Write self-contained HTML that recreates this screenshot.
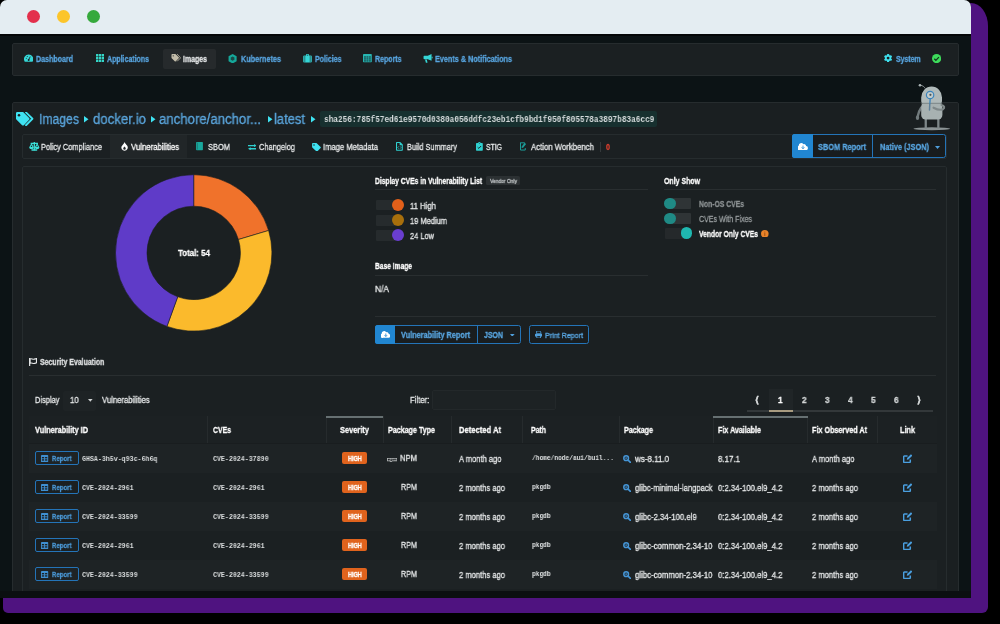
<!DOCTYPE html>
<html lang="en"><head><meta charset="utf-8"><title>Anchore Enterprise - Image Vulnerabilities</title>
<style>
html,body{margin:0;padding:0;background:#000;width:1000px;height:624px;overflow:hidden}
body{position:relative;font-family:"Liberation Sans",sans-serif}
.abs,.t,svg.i{position:absolute}
.t{white-space:pre;display:block;will-change:transform;transform-origin:0 50%;-webkit-text-stroke:.3px currentColor}
#shadow{left:3px;top:2.5px;width:985px;height:610.5px;border-radius:18px 17px 6px 5px/18px 23px 6px 5px;background:#4f1380}
#win{left:0;top:0;width:970.5px;height:598px;border-radius:7px 7px 0 0;background:#0c1315;overflow:hidden}
#bar{left:0;top:0;width:971px;height:34px;background:#e4edf2}
#barline{left:0;top:34px;width:971px;height:2px;background:#050708}
.dot{width:13px;height:13px;border-radius:50%;top:10.2px}
.panel{background:#1b2022;border:1px solid #262c2e;box-sizing:border-box;border-radius:2px}
</style></head><body>
<div id="shadow" class="abs"></div>
<div id="win" class="abs">
<div id="bar" class="abs"></div><div id="barline" class="abs"></div>
<div class="abs dot" style="left:27px;background:#e3304c"></div>
<div class="abs dot" style="left:57.2px;background:#fcc52a"></div>
<div class="abs dot" style="left:87.2px;background:#35a93c"></div>

<!-- nav panel -->
<div class="abs panel" style="left:12px;top:42.5px;width:947px;height:33.5px"></div>
<div class="abs" style="left:163px;top:48.5px;width:53px;height:20px;background:#262a2c;border-radius:2px"></div>
<!-- main panel -->
<div class="abs panel" style="left:12px;top:101.5px;width:947px;height:500px;background:#1a1f21"></div>
<!-- sha box -->
<div class="abs" style="left:319.6px;top:111.3px;width:337.5px;height:15.4px;background:#17302f;border-radius:2px"></div>
<!-- tab bar -->
<div class="abs panel" style="left:22px;top:134px;width:925px;height:25px;background:#1b2022"></div>
<div class="abs" style="left:110px;top:135px;width:77px;height:23px;background:#212628"></div>
<!-- content panel -->
<div class="abs panel" style="left:22px;top:166px;width:925px;height:440px;background:#1b2022"></div>
<!-- NAV ICONS -->
<svg class="i" style="left:23.8px;top:53.9px" width="9.300" height="8.300" viewBox="0 0 18 16"><path d="M9 1a9 9 0 0 0-7.8 13.5c.2.3.5.5.9.5h13.8c.4 0 .7-.2.9-.5A9 9 0 0 0 9 1z" fill="#35d6d6"/><circle cx="9" cy="11.5" r="1.8" fill="#1b2022"/><path d="M9 11.5l3-6.5" stroke="#1b2022" stroke-width="1.6"/><circle cx="4.5" cy="8" r="1" fill="#1b2022"/><circle cx="6.3" cy="4.8" r="1" fill="#1b2022"/></svg>
<svg class="i" style="left:95.7px;top:54px" width="8.400" height="8.400" viewBox="0 0 17 17"><g fill="#35d6c8"><rect x="0" y="0" width="5" height="5" rx=".6"/><rect x="6" y="0" width="5" height="5" rx=".6"/><rect x="12" y="0" width="5" height="5" rx=".6"/><rect x="0" y="6" width="5" height="5" rx=".6"/><rect x="6" y="6" width="5" height="5" rx=".6"/><rect x="12" y="6" width="5" height="5" rx=".6"/><rect x="0" y="12" width="5" height="5" rx=".6"/><rect x="6" y="12" width="5" height="5" rx=".6"/><rect x="12" y="12" width="5" height="5" rx=".6"/></g></svg>
<svg class="i" style="left:170.8px;top:54.2px" width="10" height="8.5" viewBox="0 0 20 17"><path d="M1 1.5A1.5 1.5 0 0 1 2.500 0h5.900a1.500 1.500 0 0 1 1.100.4l6 6a1.500 1.500 0 0 1 0 2.100l-5.900 5.900a1.500 1.500 0 0 1-2.100 0l-6-6A1.500 1.500 0 0 1 1 7.400z" fill="#c2bca9"/><path d="M12 .3l6.300 6.200a1.500 1.500 0 0 1 0 2.100l-6 6" stroke="#c2bca9" stroke-width="1.700" fill="none"/><circle cx="4.500" cy="3.700" r="1.300" fill="#2a2f31"/></svg>
<svg class="i" style="left:227.7px;top:53.600px" width="9.200" height="9.700" viewBox="0 0 16 18"><path d="M8 0l7.500 4.300v9L8 17.600.500 13.300v-9z" fill="#15a89a"/><path d="M8 4.600l3.400 2v4L8 12.600l-3.400-2v-4z" fill="#1b4a47"/></svg>
<svg class="i" style="left:302.5px;top:54px" width="9" height="8.600" viewBox="0 0 18 17"><path d="M6 3V1.500A1.500 1.500 0 0 1 7.500 0h3A1.500 1.500 0 0 1 12 1.500V3h3.500A2 2 0 0 1 17.500 5v10a2 2 0 0 1-2 2h-13a2 2 0 0 1-2-2V5a2 2 0 0 1 2-2zm1.600 0h2.800V1.600H7.600z" fill="#35d6d6"/><path d="M3.600 3v14M14.400 3v14" stroke="#1b2022" stroke-width="1.100"/></svg>
<svg class="i" style="left:362.8px;top:54.300px" width="8.800" height="8.400" viewBox="0 0 18 17"><rect x="0" y="0" width="18" height="17" rx="1.500" fill="#27b7b3"/><g fill="#1b5a5c"><rect x="2" y="4.500" width="4" height="3"/><rect x="7" y="4.500" width="4" height="3"/><rect x="12" y="4.500" width="4" height="3"/><rect x="2" y="8.500" width="4" height="3"/><rect x="7" y="8.500" width="4" height="3"/><rect x="12" y="8.500" width="4" height="3"/><rect x="2" y="12.500" width="4" height="3"/><rect x="7" y="12.500" width="4" height="3"/><rect x="12" y="12.500" width="4" height="3"/></g></svg>
<svg class="i" style="left:423.2px;top:54px" width="9.600" height="9" viewBox="0 0 19 18"><path d="M17 0v13.500L9.500 10.500H2.500A1.500 1.500 0 0 1 1 9V5A1.500 1.500 0 0 1 2.500 3.500h7z" fill="#35d6d6"/><path d="M4 11h3.500l1.300 5.500a1 1 0 0 1-1 1.200H6.500a1 1 0 0 1-1-.8z" fill="#35d6d6"/><rect x="17.300" y="5" width="1.700" height="4" rx=".8" fill="#35d6d6"/></svg>
<svg class="i" style="left:883.900px;top:54px" width="8.200" height="8.200" viewBox="0 0 20 20"><g fill="#3fe0ee"><circle cx="10" cy="10" r="7.600"/><rect x="7.400" y="0" width="5.200" height="20" rx="1" transform="rotate(0 10 10)"/><rect x="7.400" y="0" width="5.200" height="20" rx="1" transform="rotate(60 10 10)"/><rect x="7.400" y="0" width="5.200" height="20" rx="1" transform="rotate(120 10 10)"/></g><circle cx="10" cy="10" r="3.400" fill="#1b2022"/></svg>
<svg class="i" style="left:931.8px;top:54px" width="9.200" height="9.200" viewBox="0 0 20 20"><circle cx="10" cy="10" r="10" fill="#3ddb5b"/><path d="M5 10.300l3.400 3.400 6.600-6.900" stroke="#14301c" stroke-width="2.600" fill="none"/></svg>
<!-- BREADCRUMB ICONS -->
<svg class="i" style="left:15.500px;top:111.500px" width="18" height="14.500" viewBox="0 0 36 29"><path d="M0 2.500A2.500 2.500 0 0 1 2.500 0h10.600a2.500 2.500 0 0 1 1.800.700l11.400 11.400a2.500 2.500 0 0 1 0 3.500L15.700 26.300a2.500 2.500 0 0 1-3.500 0L.700 14.900A2.500 2.500 0 0 1 0 13.100z" fill="#3fe3f2"/><circle cx="6" cy="6.300" r="2.500" fill="#1b2022"/><path d="M20 .800l12.900 12.700-12.900 13" stroke="#3fe3f2" stroke-width="3.600" fill="none" stroke-linecap="round" stroke-linejoin="round"/></svg>
<svg class="i" style="left:84.400px;top:116.200px" width="4.500" height="6.500" viewBox="0 0 9 13"><path d="M0 0l9 6.500L0 13z" fill="#3fe3f2"/></svg>
<svg class="i" style="left:151px;top:116.200px" width="4.500" height="6.500" viewBox="0 0 9 13"><path d="M0 0l9 6.500L0 13z" fill="#3fe3f2"/></svg>
<svg class="i" style="left:268px;top:116.200px" width="4.500" height="6.500" viewBox="0 0 9 13"><path d="M0 0l9 6.500L0 13z" fill="#3fe3f2"/></svg>
<svg class="i" style="left:311px;top:116.200px" width="4.500" height="6.500" viewBox="0 0 9 13"><path d="M0 0l9 6.500L0 13z" fill="#3fe3f2"/></svg>
<!-- TAB ICONS -->
<svg class="i" style="left:29.400px;top:142.300px" width="10.600" height="8.800" viewBox="0 0 21 18"><g fill="#3ce0d8"><rect x="9.200" y="0" width="2.600" height="17"/><rect x="3" y="1.500" width="15" height="2.600"/><rect x="4.500" y="15" width="12" height="3" rx="1"/><path d="M0 10h9.500a4.750 5 0 0 1-9.500 0zM11.500 10H21a4.750 5 0 0 1-9.500 0z"/><path d="M4.750 2L.2 10.500h2.600l1.950-4 1.950 4h2.600zM16.250 2l-4.550 8.500h2.600l1.950-4 1.950 4h2.600z"/></g></svg>
<svg class="i" style="left:120.600px;top:142.200px" width="7" height="8.800" viewBox="0 0 14 18"><path d="M7 0c.8 3 3.500 4.500 5.300 7.300A6.700 6.700 0 0 1 7 18 6.700 6.700 0 0 1 1.200 8.600C2.500 6.300 5.500 4.600 7 0z" fill="#ffffff"/><path d="M7 9c1.300 1.600 2.600 2.700 2.600 4.400a2.600 2.600 0 0 1-5.200 0C4.400 11.700 5.700 10.600 7 9z" fill="#24292b"/></svg>
<svg class="i" style="left:195.800px;top:142.300px" width="7" height="8.300" viewBox="0 0 14 17"><rect x="0" y="0" width="14" height="17" rx="1.500" fill="#19a79c"/><rect x="2.200" y="1.500" width="1.200" height="14" fill="#1c6d68"/></svg>
<svg class="i" style="left:247.500px;top:143.600px" width="8.800" height="6.400" viewBox="0 0 18 13"><g fill="#2fd0d0"><path d="M0 1.900h12.500V0L18 3.300l-5.500 3.300V4.700H0z"/><path d="M18 8.300H5.500V6.400L0 9.700 5.500 13v-1.900H18z"/></g></svg>
<svg class="i" style="left:311.600px;top:142.600px" width="9.200" height="8.500" viewBox="0 0 18 17"><path d="M0 1.500A1.500 1.500 0 0 1 1.500 0h6.700a1.500 1.500 0 0 1 1.100.400l7.700 7.700a1.500 1.500 0 0 1 0 2.100l-6.400 6.400a1.500 1.500 0 0 1-2.100 0L.400 8.900A1.500 1.500 0 0 1 0 7.800z" fill="#3fe3f2"/><circle cx="3.800" cy="3.800" r="1.500" fill="#1b2022"/></svg>
<svg class="i" style="left:396.400px;top:142.200px" width="6.800" height="8.800" viewBox="0 0 14 18"><path d="M1.500 0h7.200L14 5.300V16.500A1.500 1.500 0 0 1 12.500 18h-11A1.500 1.500 0 0 1 0 16.500v-15A1.500 1.500 0 0 1 1.500 0z" fill="#2fd0d0"/><path d="M2.200 2.200h5.300v4.300h4.300v9.300H2.200z" fill="#1b2022"/><path d="M5.500 9L3.600 11.300l1.900 2.300M8.500 9l1.900 2.300-1.900 2.300" stroke="#2fd0d0" stroke-width="1.500" fill="none"/></svg>
<svg class="i" style="left:476.200px;top:142.200px" width="6.800" height="8.800" viewBox="0 0 14 18"><path d="M1.500 2h2.700A2.900 2.900 0 0 1 7 0a2.900 2.900 0 0 1 2.800 2h2.700A1.500 1.500 0 0 1 14 3.500v13A1.500 1.500 0 0 1 12.500 18h-11A1.500 1.500 0 0 1 0 16.500v-13A1.500 1.500 0 0 1 1.500 2z" fill="#2fd0d0"/><path d="M3.500 10.800l2.300 2.300 4.700-4.900" stroke="#1b2022" stroke-width="2" fill="none"/><circle cx="7" cy="2.800" r="1" fill="#1b2022"/></svg>
<svg class="i" style="left:520px;top:142.400px" width="8" height="8.600" viewBox="0 0 16 17"><path d="M1 1.500h8.500M1 1v15h9.500v-4" stroke="#1c9c98" stroke-width="2" fill="none"/><path d="M9 1.200l3.200 2.600-6 7.400-3 .7.400-3.200z" fill="#1c9c98"/></svg>
<div class="abs" style="left:599.700px;top:141.500px;width:1px;height:10px;background:#34393b"></div>
<!-- SBOM report button group -->
<div class="abs" style="left:792px;top:134.200px;width:154px;height:23.600px;box-sizing:border-box;border:1px solid #2474b8;border-radius:2.500px;background:#181c1e"></div>
<div class="abs" style="left:792px;top:134.200px;width:20.500px;height:23.600px;background:#2186d1;border-radius:2.500px 0 0 2.500px"></div>
<div class="abs" style="left:872.2px;top:135px;width:1px;height:22.500px;background:#2474b8"></div>
<svg class="i" style="left:797.500px;top:142.800px" width="10" height="7.200" viewBox="0 0 20 14"><path d="M16.200 6A4 4 0 0 0 10.700 2.300 5 5 0 0 0 1.500 5.500 4.200 4.200 0 0 0 4.500 14h11a4 4 0 0 0 .7-8z" fill="#fff"/><path d="M10 5v6M7.300 8.500l2.700 2.800 2.700-2.800" stroke="#2186d1" stroke-width="1.700" fill="none"/></svg>
<svg class="i" style="left:934.500px;top:145.500px" width="5" height="3" viewBox="0 0 10 6"><path d="M0 0h10L5 6z" fill="#4f9fdc"/></svg>
<svg class="i" style="left:0;top:0" width="971" height="598" viewBox="0 0 971 598"><path d="M193.70 174.70A78.2 78.2 0 0 1 268.61 230.47L238.44 239.51A46.7 46.7 0 0 0 193.70 206.20Z" fill="#f0722b" stroke="#1b2022" stroke-width="0.6"/><path d="M268.61 230.47A78.2 78.2 0 0 1 166.95 326.38L177.73 296.78A46.7 46.7 0 0 0 238.44 239.51Z" fill="#fbba2c" stroke="#1b2022" stroke-width="0.6"/><path d="M166.95 326.38A78.2 78.2 0 0 1 193.70 174.70L193.70 206.20A46.7 46.7 0 0 0 177.73 296.78Z" fill="#5f3bc8" stroke="#1b2022" stroke-width="0.6"/></svg>
<div class="abs" style="left:375px;top:189px;width:273px;height:1px;background:#292e30"></div>
<div class="abs" style="left:664px;top:189px;width:272px;height:1px;background:#292e30"></div>
<div class="abs" style="left:375px;top:275px;width:273px;height:1px;background:#292e30"></div>
<div class="abs" style="left:375px;top:315.8px;width:561px;height:1px;background:#292e30"></div>
<div class="abs" style="left:29px;top:374.6px;width:907px;height:1px;background:#292e30"></div>
<div class="abs" style="left:485.5px;top:175.800px;width:34.500px;height:9px;background:#2b3032;border-radius:1.5px"></div>
<div class="abs" style="left:376px;top:199.7px;width:20px;height:10.6px;background:#262b2d;border-radius:1px 0 0 1px"></div>
<div class="abs" style="left:391.8px;top:199px;width:12px;height:12px;border-radius:50%;background:#e2601a"></div>
<div class="abs" style="left:376px;top:215.0px;width:20px;height:10.6px;background:#262b2d;border-radius:1px 0 0 1px"></div>
<div class="abs" style="left:391.8px;top:214.3px;width:12px;height:12px;border-radius:50%;background:#a86f0c"></div>
<div class="abs" style="left:376px;top:230.0px;width:20px;height:10.6px;background:#262b2d;border-radius:1px 0 0 1px"></div>
<div class="abs" style="left:391.8px;top:229.3px;width:12px;height:12px;border-radius:50%;background:#6a3ed0"></div>
<div class="abs" style="left:664.5px;top:198.2px;width:26.5px;height:11px;background:#2f3436;border-radius:5.5px 1px 1px 5.5px"></div>
<div class="abs" style="left:664.3px;top:198.0px;width:11.4px;height:11.4px;border-radius:50%;background:#1f8a85"></div>
<div class="abs" style="left:664.5px;top:212.7px;width:26.5px;height:11px;background:#2f3436;border-radius:5.5px 1px 1px 5.5px"></div>
<div class="abs" style="left:664.3px;top:212.5px;width:11.4px;height:11.4px;border-radius:50%;background:#1f8a85"></div>
<div class="abs" style="left:664.5px;top:227.7px;width:22px;height:11px;background:#25292b;border-radius:1px"></div>
<div class="abs" style="left:680.6px;top:227.29999999999998px;width:11.8px;height:11.8px;border-radius:50%;background:#1fb8b0"></div>
<svg class="i" style="left:761.2px;top:229.7px" width="7.6" height="7.6" viewBox="0 0 16 16"><circle cx="8" cy="8" r="8" fill="#e8832a"/><rect x="7" y="6.5" width="2" height="6" fill="#9a4f12"/><circle cx="8" cy="4.3" r="1.2" fill="#9a4f12"/></svg>
<div class="abs" style="left:375.3px;top:325.2px;width:145.5px;height:18.4px;box-sizing:border-box;border:1px solid #2474b8;border-radius:2.5px;background:#191d1f"></div>
<div class="abs" style="left:375.3px;top:325.2px;width:20px;height:18.4px;background:#2186d1;border-radius:2.5px 0 0 2.5px"></div>
<div class="abs" style="left:476.5px;top:326px;width:1px;height:17.5px;background:#2474b8"></div>
<svg class="i" style="left:380.5px;top:331.3px" width="9.6" height="6.9" viewBox="0 0 20 14"><path d="M16.2 6A4 4 0 0 0 10.7 2.3 5 5 0 0 0 1.5 5.5 4.2 4.2 0 0 0 4.5 14h11a4 4 0 0 0 .7-8z" fill="#fff"/><path d="M10 5v6M7.3 8.5l2.700 2.800 2.700-2.800" stroke="#2186d1" stroke-width="1.7" fill="none"/></svg>
<svg class="i" style="left:510px;top:333.5px" width="4.6" height="2.8" viewBox="0 0 10 6"><path d="M0 0h10L5 6z" fill="#4f9fdc"/></svg>
<div class="abs" style="left:529px;top:325.2px;width:60px;height:18.4px;box-sizing:border-box;border:1px solid #2474b8;border-radius:2.5px;background:#191d1f"></div>
<svg class="i" style="left:535px;top:331px" width="7.4" height="7.4" viewBox="0 0 16 16"><path d="M3.5 0h7L12.5 2v4h-9z" fill="none" stroke="#4f9fdc" stroke-width="1.8"/><path d="M1.5 6h13A1.500 1.500 0 0 1 16 7.500V12h-3v4H3v-4H0V7.500A1.500 1.500 0 0 1 1.500 6z" fill="#4f9fdc"/><rect x="4.8" y="11" width="6.4" height="3.3" fill="#1b2022"/></svg>
<svg class="i" style="left:29.3px;top:357.5px" width="8" height="8.5" viewBox="0 0 16 17"><path d="M1.300 0v17" stroke="#e6e8e9" stroke-width="2.400"/><path d="M2 2c3-1.500 5 1 7.500.500 1.500-.3 3.500-1 5.500-1.500v8.500c-2 .8-3.500 1.500-5.500 1.500-2.500 0-4.500-2-7.500-.5z" fill="none" stroke="#e6e8e9" stroke-width="2.300"/></svg>
<div class="abs" style="left:63px;top:390.5px;width:32.5px;height:20px;background:#1e2325;border-radius:2px"></div>
<svg class="i" style="left:88px;top:399.3px" width="4.6" height="2.8" viewBox="0 0 10 6"><path d="M0 0h10L5 6z" fill="#d0d3d4"/></svg>
<div class="abs" style="left:432px;top:389.5px;width:124px;height:20px;box-sizing:border-box;background:#1d2224;border:1px solid #23282a;border-radius:2px"></div>
<div class="abs" style="left:746.7px;top:410.4px;width:186px;height:1.8px;background:#33383a"></div>
<div class="abs" style="left:769.4px;top:389px;width:23.5px;height:22px;background:#202527"></div>
<div class="abs" style="left:769.4px;top:410.2px;width:23.5px;height:2px;background:#a89b80"></div>
<div class="abs" style="left:29px;top:416.3px;width:908px;height:27px;background:#1c2123"></div>
<div class="abs" style="left:29px;top:443px;width:908px;height:1px;background:#191d1f"></div>
<div class="abs" style="left:207px;top:416.3px;width:1px;height:27px;background:#262b2d"></div>
<div class="abs" style="left:325.8px;top:416.3px;width:1px;height:27px;background:#262b2d"></div>
<div class="abs" style="left:383px;top:416.3px;width:1px;height:27px;background:#262b2d"></div>
<div class="abs" style="left:451.4px;top:416.3px;width:1px;height:27px;background:#262b2d"></div>
<div class="abs" style="left:521.6px;top:416.3px;width:1px;height:27px;background:#262b2d"></div>
<div class="abs" style="left:618.8px;top:416.3px;width:1px;height:27px;background:#262b2d"></div>
<div class="abs" style="left:712.5px;top:416.3px;width:1px;height:27px;background:#262b2d"></div>
<div class="abs" style="left:807.2px;top:416.3px;width:1px;height:27px;background:#262b2d"></div>
<div class="abs" style="left:877.4px;top:416.3px;width:1px;height:27px;background:#262b2d"></div>
<div class="abs" style="left:326.3px;top:416px;width:57px;height:1.8px;background:#667072"></div>
<div class="abs" style="left:713px;top:416px;width:94.5px;height:1.8px;background:#667072"></div>
<div class="abs" style="left:29px;top:443.6px;width:908px;height:29.0px;background:#1e2325"></div>
<div class="abs" style="left:35px;top:450.7px;width:43.5px;height:14.8px;box-sizing:border-box;border:1px solid #2474b8;border-radius:2px"></div>
<svg class="i" style="left:41.4px;top:454.5px" width="7.2" height="7.2" viewBox="0 0 16 16"><rect x="0" y="0" width="16" height="16" rx="1.5" fill="#3f8fd0"/><g fill="#1b2022"><rect x="2" y="4.5" width="5" height="3"/><rect x="9" y="4.5" width="5" height="3"/><rect x="2" y="9.5" width="5" height="3"/><rect x="9" y="9.5" width="5" height="3"/></g></svg>
<div class="abs" style="left:342.3px;top:451.8px;width:24.5px;height:12.6px;background:#e0631d;border-radius:2px"></div>
<svg class="i" style="left:387.3px;top:457.5px" width="10.200" height="4.200" viewBox="0 0 18 7"><path d="M0 0h18v5.600H9V7H5V5.600H0z" fill="#b4b7b8"/><path d="M1.5 1.200h3.800v3.200h-1V2.300h-.9v2.100H1.500zM6.200 1.200h3.900v3.200H8.100v1H6.200zm1.900 1v1.200h.9V2.200zM11 1.200h5.600v3.200h-1V2.300h-.9v2.100h-.9V2.300h-.9v2.100H11z" fill="#1b2022"/></svg>
<svg class="i" style="left:623.4px;top:454.5px" width="8" height="8" viewBox="0 0 16 16"><circle cx="6.300" cy="6.300" r="4.700" fill="none" stroke="#4595d6" stroke-width="3"/><path d="M10.200 10.200l4.600 4.600" stroke="#4595d6" stroke-width="3.200" stroke-linecap="round"/><path d="M6.300 4.200v4.200M4.200 6.300h4.200" stroke="#4595d6" stroke-width="1.300"/></svg>
<svg class="i" style="left:902.8px;top:454.1px" width="9.6" height="9" viewBox="0 0 19 18"><path d="M14.500 11v4.300a1.500 1.500 0 0 1-1.500 1.500H2.700a1.500 1.500 0 0 1-1.500-1.500V5.700A1.500 1.500 0 0 1 2.700 4.200H9" fill="none" stroke="#4a9fe0" stroke-width="3"/><path d="M7.500 11.500l.6-3.300L15.800.500l2.700 2.700-7.700 7.700z" fill="#4a9fe0"/></svg>
<div class="abs" style="left:35px;top:479.7px;width:43.5px;height:14.8px;box-sizing:border-box;border:1px solid #2474b8;border-radius:2px"></div>
<svg class="i" style="left:41.4px;top:483.5px" width="7.2" height="7.2" viewBox="0 0 16 16"><rect x="0" y="0" width="16" height="16" rx="1.5" fill="#3f8fd0"/><g fill="#1b2022"><rect x="2" y="4.5" width="5" height="3"/><rect x="9" y="4.5" width="5" height="3"/><rect x="2" y="9.5" width="5" height="3"/><rect x="9" y="9.5" width="5" height="3"/></g></svg>
<div class="abs" style="left:342.3px;top:480.8px;width:24.5px;height:12.6px;background:#e0631d;border-radius:2px"></div>
<svg class="i" style="left:623.4px;top:483.5px" width="8" height="8" viewBox="0 0 16 16"><circle cx="6.300" cy="6.300" r="4.700" fill="none" stroke="#4595d6" stroke-width="3"/><path d="M10.200 10.200l4.600 4.600" stroke="#4595d6" stroke-width="3.200" stroke-linecap="round"/><path d="M6.300 4.200v4.200M4.200 6.300h4.200" stroke="#4595d6" stroke-width="1.300"/></svg>
<svg class="i" style="left:902.8px;top:483.1px" width="9.6" height="9" viewBox="0 0 19 18"><path d="M14.500 11v4.300a1.500 1.500 0 0 1-1.500 1.500H2.700a1.500 1.500 0 0 1-1.500-1.500V5.700A1.500 1.500 0 0 1 2.700 4.200H9" fill="none" stroke="#4a9fe0" stroke-width="3"/><path d="M7.500 11.500l.6-3.300L15.800.500l2.700 2.700-7.700 7.700z" fill="#4a9fe0"/></svg>
<div class="abs" style="left:29px;top:501.6px;width:908px;height:29.0px;background:#1e2325"></div>
<div class="abs" style="left:35px;top:508.7px;width:43.5px;height:14.8px;box-sizing:border-box;border:1px solid #2474b8;border-radius:2px"></div>
<svg class="i" style="left:41.4px;top:512.5px" width="7.2" height="7.2" viewBox="0 0 16 16"><rect x="0" y="0" width="16" height="16" rx="1.5" fill="#3f8fd0"/><g fill="#1b2022"><rect x="2" y="4.5" width="5" height="3"/><rect x="9" y="4.5" width="5" height="3"/><rect x="2" y="9.5" width="5" height="3"/><rect x="9" y="9.5" width="5" height="3"/></g></svg>
<div class="abs" style="left:342.3px;top:509.8px;width:24.5px;height:12.6px;background:#e0631d;border-radius:2px"></div>
<svg class="i" style="left:623.4px;top:512.5px" width="8" height="8" viewBox="0 0 16 16"><circle cx="6.300" cy="6.300" r="4.700" fill="none" stroke="#4595d6" stroke-width="3"/><path d="M10.200 10.200l4.600 4.600" stroke="#4595d6" stroke-width="3.200" stroke-linecap="round"/><path d="M6.300 4.200v4.200M4.200 6.300h4.200" stroke="#4595d6" stroke-width="1.300"/></svg>
<svg class="i" style="left:902.8px;top:512.1px" width="9.6" height="9" viewBox="0 0 19 18"><path d="M14.500 11v4.300a1.500 1.500 0 0 1-1.500 1.500H2.700a1.500 1.500 0 0 1-1.500-1.500V5.700A1.500 1.500 0 0 1 2.700 4.200H9" fill="none" stroke="#4a9fe0" stroke-width="3"/><path d="M7.500 11.500l.6-3.300L15.800.500l2.700 2.700-7.700 7.700z" fill="#4a9fe0"/></svg>
<div class="abs" style="left:35px;top:537.7px;width:43.5px;height:14.8px;box-sizing:border-box;border:1px solid #2474b8;border-radius:2px"></div>
<svg class="i" style="left:41.4px;top:541.5px" width="7.2" height="7.2" viewBox="0 0 16 16"><rect x="0" y="0" width="16" height="16" rx="1.5" fill="#3f8fd0"/><g fill="#1b2022"><rect x="2" y="4.5" width="5" height="3"/><rect x="9" y="4.5" width="5" height="3"/><rect x="2" y="9.5" width="5" height="3"/><rect x="9" y="9.5" width="5" height="3"/></g></svg>
<div class="abs" style="left:342.3px;top:538.8px;width:24.5px;height:12.6px;background:#e0631d;border-radius:2px"></div>
<svg class="i" style="left:623.4px;top:541.5px" width="8" height="8" viewBox="0 0 16 16"><circle cx="6.300" cy="6.300" r="4.700" fill="none" stroke="#4595d6" stroke-width="3"/><path d="M10.200 10.200l4.600 4.600" stroke="#4595d6" stroke-width="3.200" stroke-linecap="round"/><path d="M6.300 4.200v4.200M4.200 6.300h4.200" stroke="#4595d6" stroke-width="1.300"/></svg>
<svg class="i" style="left:902.8px;top:541.1px" width="9.6" height="9" viewBox="0 0 19 18"><path d="M14.500 11v4.300a1.500 1.500 0 0 1-1.500 1.500H2.700a1.500 1.500 0 0 1-1.500-1.500V5.700A1.500 1.500 0 0 1 2.700 4.200H9" fill="none" stroke="#4a9fe0" stroke-width="3"/><path d="M7.500 11.500l.6-3.300L15.800.500l2.700 2.700-7.700 7.700z" fill="#4a9fe0"/></svg>
<div class="abs" style="left:29px;top:559.6px;width:908px;height:29.0px;background:#1e2325"></div>
<div class="abs" style="left:35px;top:566.7px;width:43.5px;height:14.8px;box-sizing:border-box;border:1px solid #2474b8;border-radius:2px"></div>
<svg class="i" style="left:41.4px;top:570.5px" width="7.2" height="7.2" viewBox="0 0 16 16"><rect x="0" y="0" width="16" height="16" rx="1.5" fill="#3f8fd0"/><g fill="#1b2022"><rect x="2" y="4.5" width="5" height="3"/><rect x="9" y="4.5" width="5" height="3"/><rect x="2" y="9.5" width="5" height="3"/><rect x="9" y="9.5" width="5" height="3"/></g></svg>
<div class="abs" style="left:342.3px;top:567.8px;width:24.5px;height:12.6px;background:#e0631d;border-radius:2px"></div>
<svg class="i" style="left:623.4px;top:570.5px" width="8" height="8" viewBox="0 0 16 16"><circle cx="6.300" cy="6.300" r="4.700" fill="none" stroke="#4595d6" stroke-width="3"/><path d="M10.200 10.200l4.600 4.600" stroke="#4595d6" stroke-width="3.200" stroke-linecap="round"/><path d="M6.300 4.200v4.200M4.200 6.300h4.200" stroke="#4595d6" stroke-width="1.300"/></svg>
<svg class="i" style="left:902.8px;top:570.1px" width="9.6" height="9" viewBox="0 0 19 18"><path d="M14.500 11v4.300a1.500 1.500 0 0 1-1.500 1.500H2.700a1.500 1.500 0 0 1-1.500-1.500V5.700A1.500 1.500 0 0 1 2.700 4.200H9" fill="none" stroke="#4a9fe0" stroke-width="3"/><path d="M7.500 11.500l.6-3.300L15.800.500l2.700 2.700-7.700 7.700z" fill="#4a9fe0"/></svg>
<svg class="i" style="left:900px;top:76px" width="64" height="60" viewBox="900 76 64 60">
<ellipse cx="931.8" cy="128.8" rx="18.3" ry="1.5" fill="#8b9395"/>
<rect x="924.6" y="118" width="2.3" height="10.5" fill="#7d8688"/><rect x="937.2" y="118" width="2.3" height="10.5" fill="#7d8688"/>
<path d="M921.3 107.500C919.500 110 918.500 113 917.800 116" stroke="#727b7d" stroke-width="2.4" stroke-linecap="round" fill="none"/><ellipse cx="917.5" cy="117.8" rx="1.7" ry="2.3" fill="#727b7d"/>
<rect x="921.2" y="102" width="21.2" height="17.5" rx="4.5" fill="#a7b1b1"/>
<path d="M921.200 97.500a10.400 11 0 0 1 20.800 0v3.500a2.500 2.500 0 0 1-2.500 2.500h-15.800a2.500 2.500 0 0 1-2.500-2.500z" fill="#b0baba"/>
<path d="M921.200 103.300h21" stroke="#6f797a" stroke-width=".8"/>
<path d="M941.500 105c3 .5 3.500 3 1.500 4.200-2.500 1.200-6 .3-9.500-1.500" stroke="#7f8889" stroke-width="2.100" stroke-linecap="round" fill="none"/>
<path d="M925.300 88.500C924 86.500 922.500 85.500 920.500 85.300" stroke="#8b9395" stroke-width=".9" fill="none"/><circle cx="920" cy="85.200" r="1.300" fill="#aab3b4"/>
<circle cx="930.1" cy="95" r="3.7" fill="#c3cccc" stroke="#3b84bd" stroke-width="1.2"/><circle cx="930.4" cy="94.800" r="1.100" fill="#4d5557"/>
<path d="M930.200 98.800l-.4 5.200" stroke="#3b84bd" stroke-width="1.300"/><path d="M929.800 104l-.3 6" stroke="#5d7f99" stroke-width="1.500" stroke-linecap="round"/>
</svg>
<div class="abs" style="left:0;top:591.3px;width:971px;height:7px;background:#0b0f11"></div>
<span class="t" style='left:36.0px;top:52.6px;font:700 9px/13px "Liberation Sans", sans-serif;color:#58a5e0;transform:scaleX(0.7870);'>Dashboard</span>
<span class="t" style='left:107.0px;top:52.6px;font:700 9px/13px "Liberation Sans", sans-serif;color:#58a5e0;transform:scaleX(0.7776);'>Applications</span>
<span class="t" style='left:183.0px;top:52.6px;font:700 9px/13px "Liberation Sans", sans-serif;color:#e6e8e9;transform:scaleX(0.7734);'>Images</span>
<span class="t" style='left:241.0px;top:52.6px;font:700 9px/13px "Liberation Sans", sans-serif;color:#58a5e0;transform:scaleX(0.8078);'>Kubernetes</span>
<span class="t" style='left:314.5px;top:52.6px;font:700 9px/13px "Liberation Sans", sans-serif;color:#58a5e0;transform:scaleX(0.7787);'>Policies</span>
<span class="t" style='left:374.5px;top:52.6px;font:700 9px/13px "Liberation Sans", sans-serif;color:#58a5e0;transform:scaleX(0.7791);'>Reports</span>
<span class="t" style='left:435.0px;top:52.6px;font:700 9px/13px "Liberation Sans", sans-serif;color:#58a5e0;transform:scaleX(0.8062);'>Events &amp; Notifications</span>
<span class="t" style='left:895.6px;top:52.6px;font:700 9px/13px "Liberation Sans", sans-serif;color:#58a5e0;transform:scaleX(0.7680);'>System</span>
<span class="t" style='left:39.0px;top:109.1px;font:400 14px/20px "Liberation Sans", sans-serif;color:#5aa5dc;transform:scaleX(0.8710);'>Images</span>
<span class="t" style='left:93.0px;top:109.1px;font:400 14px/20px "Liberation Sans", sans-serif;color:#5aa5dc;transform:scaleX(0.9456);'>docker.io</span>
<span class="t" style='left:159.0px;top:109.1px;font:400 14px/20px "Liberation Sans", sans-serif;color:#5aa5dc;transform:scaleX(0.9428);'>anchore/anchor...</span>
<span class="t" style='left:274.0px;top:109.1px;font:400 14px/20px "Liberation Sans", sans-serif;color:#5aa5dc;transform:scaleX(0.9262);'>latest</span>
<span class="t" style='left:323.6px;top:113.5px;font:700 9px/13px "Liberation Mono", monospace;color:#d4dadb;transform:scaleX(0.8616);-webkit-text-stroke:0;'>sha256:785f57ed61e9570d0380a056ddfc23eb1cfb9bd1f950f805578a3897b83a6cc9</span>
<span class="t" style='left:41.0px;top:140.6px;font:400 9px/13px "Liberation Sans", sans-serif;color:#e6e8e9;transform:scaleX(0.8240);'>Policy Compliance</span>
<span class="t" style='left:131.0px;top:140.6px;font:400 9px/13px "Liberation Sans", sans-serif;color:#ffffff;transform:scaleX(0.8617);'>Vulnerabilities</span>
<span class="t" style='left:208.0px;top:140.6px;font:400 9px/13px "Liberation Sans", sans-serif;color:#e6e8e9;transform:scaleX(0.8297);'>SBOM</span>
<span class="t" style='left:259.0px;top:140.6px;font:400 9px/13px "Liberation Sans", sans-serif;color:#e6e8e9;transform:scaleX(0.8267);'>Changelog</span>
<span class="t" style='left:323.0px;top:140.6px;font:400 9px/13px "Liberation Sans", sans-serif;color:#e6e8e9;transform:scaleX(0.8455);'>Image Metadata</span>
<span class="t" style='left:407.0px;top:140.6px;font:400 9px/13px "Liberation Sans", sans-serif;color:#e6e8e9;transform:scaleX(0.8193);'>Build Summary</span>
<span class="t" style='left:486.0px;top:140.6px;font:400 9px/13px "Liberation Sans", sans-serif;color:#e6e8e9;transform:scaleX(0.7613);'>STIG</span>
<span class="t" style='left:531.0px;top:140.6px;font:400 9px/13px "Liberation Sans", sans-serif;color:#e6e8e9;transform:scaleX(0.8645);'>Action Workbench</span>
<span class="t" style='left:606.0px;top:140.6px;font:700 9px/13px "Liberation Sans", sans-serif;color:#e0402f;transform:scaleX(0.7975);'>0</span>
<span class="t" style='left:818.0px;top:140.6px;font:700 9px/13px "Liberation Sans", sans-serif;color:#58a5e0;transform:scaleX(0.8205);'>SBOM Report</span>
<span class="t" style='left:880.0px;top:140.6px;font:700 9px/13px "Liberation Sans", sans-serif;color:#58a5e0;transform:scaleX(0.8162);'>Native (JSON)</span>
<span class="t" style='left:178.0px;top:246.6px;font:700 9px/13px "Liberation Sans", sans-serif;color:#ffffff;transform:scaleX(0.8805);'>Total: 54</span>
<span class="t" style='left:375.0px;top:175.1px;font:700 9px/13px "Liberation Sans", sans-serif;color:#ffffff;transform:scaleX(0.7471);'>Display CVEs in Vulnerability List</span>
<span class="t" style='left:489.5px;top:177.0px;font:400 5.5px/8px "Liberation Sans", sans-serif;color:#b8bcbe;transform:scaleX(0.8916);'>Vendor Only</span>
<span class="t" style='left:410.0px;top:199.6px;font:400 9px/13px "Liberation Sans", sans-serif;color:#e6e8e9;transform:scaleX(0.8564);'>11 High</span>
<span class="t" style='left:410.0px;top:214.6px;font:400 9px/13px "Liberation Sans", sans-serif;color:#e6e8e9;transform:scaleX(0.8309);'>19 Medium</span>
<span class="t" style='left:410.0px;top:229.6px;font:400 9px/13px "Liberation Sans", sans-serif;color:#e6e8e9;transform:scaleX(0.8267);'>24 Low</span>
<span class="t" style='left:375.0px;top:260.1px;font:700 9px/13px "Liberation Sans", sans-serif;color:#ffffff;transform:scaleX(0.7395);'>Base Image</span>
<span class="t" style='left:375.0px;top:283.1px;font:400 9px/13px "Liberation Sans", sans-serif;color:#e6e8e9;transform:scaleX(0.9324);'>N/A</span>
<span class="t" style='left:401.0px;top:328.6px;font:700 9px/13px "Liberation Sans", sans-serif;color:#58a5e0;transform:scaleX(0.8100);'>Vulnerability Report</span>
<span class="t" style='left:484.0px;top:328.6px;font:700 9px/13px "Liberation Sans", sans-serif;color:#58a5e0;transform:scaleX(0.7750);'>JSON</span>
<span class="t" style='left:545.0px;top:330.6px;font:400 7.5px/10px "Liberation Sans", sans-serif;color:#58a5e0;transform:scaleX(0.9493);'>Print Report</span>
<span class="t" style='left:664.0px;top:175.1px;font:700 9px/13px "Liberation Sans", sans-serif;color:#ffffff;transform:scaleX(0.7739);'>Only Show</span>
<span class="t" style='left:699.0px;top:197.8px;font:700 9px/13px "Liberation Sans", sans-serif;color:#8b9092;transform:scaleX(0.7561);'>Non-OS CVEs</span>
<span class="t" style='left:699.0px;top:213.1px;font:400 9px/13px "Liberation Sans", sans-serif;color:#9a9fa1;transform:scaleX(0.7850);'>CVEs With Fixes</span>
<span class="t" style='left:699.0px;top:227.6px;font:700 9px/13px "Liberation Sans", sans-serif;color:#ffffff;transform:scaleX(0.7465);'>Vendor Only CVEs</span>
<span class="t" style='left:40.0px;top:355.9px;font:700 9px/13px "Liberation Sans", sans-serif;color:#dfe1e2;transform:scaleX(0.7710);'>Security Evaluation</span>
<span class="t" style='left:35.0px;top:394.0px;font:400 9px/13px "Liberation Sans", sans-serif;color:#e6e8e9;transform:scaleX(0.8267);'>Display</span>
<span class="t" style='left:70.0px;top:394.0px;font:400 9px/13px "Liberation Sans", sans-serif;color:#e6e8e9;transform:scaleX(0.8686);'>10</span>
<span class="t" style='left:102.0px;top:394.0px;font:400 9px/13px "Liberation Sans", sans-serif;color:#e6e8e9;transform:scaleX(0.8545);'>Vulnerabilities</span>
<span class="t" style='left:410.2px;top:394.1px;font:400 9px/13px "Liberation Sans", sans-serif;color:#e6e8e9;transform:scaleX(0.8578);'>Filter:</span>
<span class="t" style='left:754.7px;top:393.9px;font:700 9px/13px "Liberation Sans", sans-serif;color:#d2d5d6;transform:scaleX(1.1500);'>⟨</span>
<span class="t" style='left:777.7px;top:393.9px;font:700 9px/13px "Liberation Sans", sans-serif;color:#ffffff;transform:scaleX(0.9171);'>1</span>
<span class="t" style='left:801.7px;top:393.9px;font:700 9px/13px "Liberation Sans", sans-serif;color:#d2d5d6;transform:scaleX(0.9171);'>2</span>
<span class="t" style='left:824.7px;top:393.9px;font:700 9px/13px "Liberation Sans", sans-serif;color:#d2d5d6;transform:scaleX(0.9171);'>3</span>
<span class="t" style='left:847.7px;top:393.9px;font:700 9px/13px "Liberation Sans", sans-serif;color:#d2d5d6;transform:scaleX(0.9171);'>4</span>
<span class="t" style='left:870.7px;top:393.9px;font:700 9px/13px "Liberation Sans", sans-serif;color:#d2d5d6;transform:scaleX(0.9171);'>5</span>
<span class="t" style='left:893.7px;top:393.9px;font:700 9px/13px "Liberation Sans", sans-serif;color:#d2d5d6;transform:scaleX(0.9171);'>6</span>
<span class="t" style='left:916.7px;top:393.9px;font:700 9px/13px "Liberation Sans", sans-serif;color:#d2d5d6;transform:scaleX(1.1500);'>⟩</span>
<span class="t" style='left:35.0px;top:424.0px;font:700 9px/13px "Liberation Sans", sans-serif;color:#ffffff;transform:scaleX(0.8130);'>Vulnerability ID</span>
<span class="t" style='left:213.0px;top:424.0px;font:700 9px/13px "Liberation Sans", sans-serif;color:#ffffff;transform:scaleX(0.7654);'>CVEs</span>
<span class="t" style='left:340.0px;top:424.0px;font:700 9px/13px "Liberation Sans", sans-serif;color:#ffffff;transform:scaleX(0.8278);'>Severity</span>
<span class="t" style='left:388.0px;top:424.0px;font:700 9px/13px "Liberation Sans", sans-serif;color:#ffffff;transform:scaleX(0.7916);'>Package Type</span>
<span class="t" style='left:459.0px;top:424.0px;font:700 9px/13px "Liberation Sans", sans-serif;color:#ffffff;transform:scaleX(0.8453);'>Detected At</span>
<span class="t" style='left:531.0px;top:424.0px;font:700 9px/13px "Liberation Sans", sans-serif;color:#ffffff;transform:scaleX(0.7686);'>Path</span>
<span class="t" style='left:624.0px;top:424.0px;font:700 9px/13px "Liberation Sans", sans-serif;color:#ffffff;transform:scaleX(0.7938);'>Package</span>
<span class="t" style='left:718.0px;top:424.0px;font:700 9px/13px "Liberation Sans", sans-serif;color:#ffffff;transform:scaleX(0.7910);'>Fix Available</span>
<span class="t" style='left:812.0px;top:424.0px;font:700 9px/13px "Liberation Sans", sans-serif;color:#ffffff;transform:scaleX(0.8007);'>Fix Observed At</span>
<span class="t" style='left:900.0px;top:424.0px;font:700 9px/13px "Liberation Sans", sans-serif;color:#ffffff;transform:scaleX(0.8101);'>Link</span>
<span class="t" style='left:51.5px;top:453.7px;font:700 7.5px/10px "Liberation Sans", sans-serif;color:#4a97d4;transform:scaleX(0.8067);'>Report</span>
<span class="t" style='left:82.0px;top:453.7px;font:700 7.4px/10px "Liberation Mono", monospace;color:#d9dcdd;transform:scaleX(0.8950);-webkit-text-stroke:0;'>GHSA-3h5v-q93c-6h6q</span>
<span class="t" style='left:213.0px;top:453.7px;font:700 7.4px/10px "Liberation Mono", monospace;color:#d9dcdd;transform:scaleX(0.8951);-webkit-text-stroke:0;'>CVE-2024-37890</span>
<span class="t" style='left:347.5px;top:453.7px;font:700 6.5px/9px "Liberation Sans", sans-serif;color:#ffffff;transform:scaleX(0.8492);'>HIGH</span>
<span class="t" style='left:400.0px;top:452.0px;font:400 9px/13px "Liberation Sans", sans-serif;color:#e6e8e9;transform:scaleX(0.8500);'>NPM</span>
<span class="t" style='left:459.0px;top:452.7px;font:400 9px/13px "Liberation Sans", sans-serif;color:#e6e8e9;transform:scaleX(0.8408);'>A month ago</span>
<span class="t" style='left:532.0px;top:453.2px;font:700 7px/10px "Liberation Mono", monospace;color:#dfe2e3;transform:scaleX(0.8855);-webkit-text-stroke:0;'>/home/node/aui/buil...</span>
<span class="t" style='left:634.5px;top:452.7px;font:400 9px/13px "Liberation Sans", sans-serif;color:#e6e8e9;transform:scaleX(0.8916);'>ws-8.11.0</span>
<span class="t" style='left:718.0px;top:452.7px;font:400 9px/13px "Liberation Sans", sans-serif;color:#e6e8e9;transform:scaleX(0.8789);'>8.17.1</span>
<span class="t" style='left:812.0px;top:452.7px;font:400 9px/13px "Liberation Sans", sans-serif;color:#e6e8e9;transform:scaleX(0.8408);'>A month ago</span>
<span class="t" style='left:51.5px;top:482.7px;font:700 7.5px/10px "Liberation Sans", sans-serif;color:#4a97d4;transform:scaleX(0.8067);'>Report</span>
<span class="t" style='left:82.0px;top:482.7px;font:700 7.4px/10px "Liberation Mono", monospace;color:#d9dcdd;transform:scaleX(0.8949);-webkit-text-stroke:0;'>CVE-2024-2961</span>
<span class="t" style='left:213.0px;top:482.7px;font:700 7.4px/10px "Liberation Mono", monospace;color:#d9dcdd;transform:scaleX(0.8949);-webkit-text-stroke:0;'>CVE-2024-2961</span>
<span class="t" style='left:347.5px;top:482.7px;font:700 6.5px/9px "Liberation Sans", sans-serif;color:#ffffff;transform:scaleX(0.8492);'>HIGH</span>
<span class="t" style='left:401.0px;top:481.0px;font:400 9px/13px "Liberation Sans", sans-serif;color:#e6e8e9;transform:scaleX(0.8000);'>RPM</span>
<span class="t" style='left:459.0px;top:481.7px;font:400 9px/13px "Liberation Sans", sans-serif;color:#e6e8e9;transform:scaleX(0.8433);'>2 months ago</span>
<span class="t" style='left:532.0px;top:482.2px;font:700 7px/10px "Liberation Mono", monospace;color:#dfe2e3;transform:scaleX(0.8851);-webkit-text-stroke:0;'>pkgdb</span>
<span class="t" style='left:634.5px;top:481.7px;font:400 9px/13px "Liberation Sans", sans-serif;color:#e6e8e9;transform:scaleX(0.8466);'>glibc-minimal-langpack</span>
<span class="t" style='left:718.0px;top:481.7px;font:400 9px/13px "Liberation Sans", sans-serif;color:#e6e8e9;transform:scaleX(0.8591);'>0:2.34-100.el9_4.2</span>
<span class="t" style='left:812.0px;top:481.7px;font:400 9px/13px "Liberation Sans", sans-serif;color:#e6e8e9;transform:scaleX(0.8433);'>2 months ago</span>
<span class="t" style='left:51.5px;top:511.7px;font:700 7.5px/10px "Liberation Sans", sans-serif;color:#4a97d4;transform:scaleX(0.8067);'>Report</span>
<span class="t" style='left:82.0px;top:511.7px;font:700 7.4px/10px "Liberation Mono", monospace;color:#d9dcdd;transform:scaleX(0.8951);-webkit-text-stroke:0;'>CVE-2024-33599</span>
<span class="t" style='left:213.0px;top:511.7px;font:700 7.4px/10px "Liberation Mono", monospace;color:#d9dcdd;transform:scaleX(0.8951);-webkit-text-stroke:0;'>CVE-2024-33599</span>
<span class="t" style='left:347.5px;top:511.7px;font:700 6.5px/9px "Liberation Sans", sans-serif;color:#ffffff;transform:scaleX(0.8492);'>HIGH</span>
<span class="t" style='left:401.0px;top:510.0px;font:400 9px/13px "Liberation Sans", sans-serif;color:#e6e8e9;transform:scaleX(0.8000);'>RPM</span>
<span class="t" style='left:459.0px;top:510.7px;font:400 9px/13px "Liberation Sans", sans-serif;color:#e6e8e9;transform:scaleX(0.8433);'>2 months ago</span>
<span class="t" style='left:532.0px;top:511.2px;font:700 7px/10px "Liberation Mono", monospace;color:#dfe2e3;transform:scaleX(0.8851);-webkit-text-stroke:0;'>pkgdb</span>
<span class="t" style='left:634.5px;top:510.7px;font:400 9px/13px "Liberation Sans", sans-serif;color:#e6e8e9;transform:scaleX(0.8636);'>glibc-2.34-100.el9</span>
<span class="t" style='left:718.0px;top:510.7px;font:400 9px/13px "Liberation Sans", sans-serif;color:#e6e8e9;transform:scaleX(0.8591);'>0:2.34-100.el9_4.2</span>
<span class="t" style='left:812.0px;top:510.7px;font:400 9px/13px "Liberation Sans", sans-serif;color:#e6e8e9;transform:scaleX(0.8433);'>2 months ago</span>
<span class="t" style='left:51.5px;top:540.7px;font:700 7.5px/10px "Liberation Sans", sans-serif;color:#4a97d4;transform:scaleX(0.8067);'>Report</span>
<span class="t" style='left:82.0px;top:540.7px;font:700 7.4px/10px "Liberation Mono", monospace;color:#d9dcdd;transform:scaleX(0.8949);-webkit-text-stroke:0;'>CVE-2024-2961</span>
<span class="t" style='left:213.0px;top:540.7px;font:700 7.4px/10px "Liberation Mono", monospace;color:#d9dcdd;transform:scaleX(0.8949);-webkit-text-stroke:0;'>CVE-2024-2961</span>
<span class="t" style='left:347.5px;top:540.7px;font:700 6.5px/9px "Liberation Sans", sans-serif;color:#ffffff;transform:scaleX(0.8492);'>HIGH</span>
<span class="t" style='left:401.0px;top:539.0px;font:400 9px/13px "Liberation Sans", sans-serif;color:#e6e8e9;transform:scaleX(0.8000);'>RPM</span>
<span class="t" style='left:459.0px;top:539.7px;font:400 9px/13px "Liberation Sans", sans-serif;color:#e6e8e9;transform:scaleX(0.8433);'>2 months ago</span>
<span class="t" style='left:532.0px;top:540.2px;font:700 7px/10px "Liberation Mono", monospace;color:#dfe2e3;transform:scaleX(0.8851);-webkit-text-stroke:0;'>pkgdb</span>
<span class="t" style='left:634.5px;top:539.7px;font:400 9px/13px "Liberation Sans", sans-serif;color:#e6e8e9;transform:scaleX(0.8655);'>glibc-common-2.34-10</span>
<span class="t" style='left:718.0px;top:539.7px;font:400 9px/13px "Liberation Sans", sans-serif;color:#e6e8e9;transform:scaleX(0.8591);'>0:2.34-100.el9_4.2</span>
<span class="t" style='left:812.0px;top:539.7px;font:400 9px/13px "Liberation Sans", sans-serif;color:#e6e8e9;transform:scaleX(0.8433);'>2 months ago</span>
<span class="t" style='left:51.5px;top:569.7px;font:700 7.5px/10px "Liberation Sans", sans-serif;color:#4a97d4;transform:scaleX(0.8067);'>Report</span>
<span class="t" style='left:82.0px;top:569.7px;font:700 7.4px/10px "Liberation Mono", monospace;color:#d9dcdd;transform:scaleX(0.8951);-webkit-text-stroke:0;'>CVE-2024-33599</span>
<span class="t" style='left:213.0px;top:569.7px;font:700 7.4px/10px "Liberation Mono", monospace;color:#d9dcdd;transform:scaleX(0.8951);-webkit-text-stroke:0;'>CVE-2024-33599</span>
<span class="t" style='left:347.5px;top:569.7px;font:700 6.5px/9px "Liberation Sans", sans-serif;color:#ffffff;transform:scaleX(0.8492);'>HIGH</span>
<span class="t" style='left:401.0px;top:568.0px;font:400 9px/13px "Liberation Sans", sans-serif;color:#e6e8e9;transform:scaleX(0.8000);'>RPM</span>
<span class="t" style='left:459.0px;top:568.7px;font:400 9px/13px "Liberation Sans", sans-serif;color:#e6e8e9;transform:scaleX(0.8433);'>2 months ago</span>
<span class="t" style='left:532.0px;top:569.2px;font:700 7px/10px "Liberation Mono", monospace;color:#dfe2e3;transform:scaleX(0.8851);-webkit-text-stroke:0;'>pkgdb</span>
<span class="t" style='left:634.5px;top:568.7px;font:400 9px/13px "Liberation Sans", sans-serif;color:#e6e8e9;transform:scaleX(0.8655);'>glibc-common-2.34-10</span>
<span class="t" style='left:718.0px;top:568.7px;font:400 9px/13px "Liberation Sans", sans-serif;color:#e6e8e9;transform:scaleX(0.8591);'>0:2.34-100.el9_4.2</span>
<span class="t" style='left:812.0px;top:568.7px;font:400 9px/13px "Liberation Sans", sans-serif;color:#e6e8e9;transform:scaleX(0.8433);'>2 months ago</span>
</div>
</body></html>
